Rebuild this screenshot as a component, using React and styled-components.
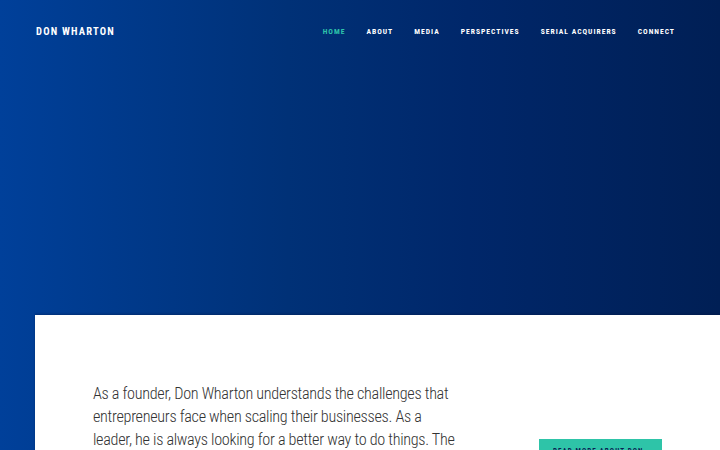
import styled, { createGlobalStyle } from "styled-components";

const GlobalStyle = createGlobalStyle`
  html, body {
    margin: 0;
    padding: 0;
    background: #001f55;
  }
  body {
    font-family: "Roboto", "Liberation Sans", sans-serif;
    overflow: hidden;
  }
`;

const Page = styled.div`
  width: 720px;
  height: 450px;
  overflow: hidden;
  background: linear-gradient(90deg, #00409a 0%, #003177 40%, #00276a 65%, #001f55 100%);
  display: flex;
  flex-direction: column;
`;

const Hero = styled.header`
  height: 315px;
  flex-shrink: 0;
`;

const TopBar = styled.div`
  display: flex;
  align-items: center;
  justify-content: space-between;
  padding: 25px 45px 0 36px;
  height: 12px;
`;

const Brand = styled.div`
  color: #ffffff;
  font-weight: 700;
  font-size: 10.5px;
  letter-spacing: 1.2px;
  font-stretch: 80%;
`;

const Nav = styled.nav`
  display: flex;
  gap: 21px;
`;

const NavLink = styled.a`
  color: ${(p) => (p.$active ? "#2ec4aa" : "#ffffff")};
  font-weight: 700;
  font-size: 7.6px;
  letter-spacing: 1px;
  font-stretch: 80%;
  text-decoration: none;
`;

const Card = styled.section`
  flex: 1;
  margin-left: 35px;
  background: #ffffff;
  box-shadow: 0 -1px 2px rgba(0, 20, 60, 0.35);
  display: flex;
  padding: 67px 0 0 58px;
`;

const Intro = styled.p`
  margin: 0;
  width: 370px;
  flex-shrink: 0;
  font-size: 16.2px;
  line-height: 23px;
  font-weight: 300;
  font-stretch: 75%;
  letter-spacing: -0.3px;
  color: #333;
`;

const Aside = styled.div`
  padding: 56px 0 0 76px;
`;

const Button = styled.a`
  display: inline-block;
  background: #2ec4a8;
  color: #0b2153;
  font-size: 7px;
  font-weight: 700;
  letter-spacing: 1.1px;
  font-stretch: 80%;
  padding: 8px 14px;
  width: 95px;
  white-space: nowrap;
  text-decoration: none;
`;

const links = ["Home", "About", "Media", "Perspectives", "Serial Acquirers", "Connect"];

export default function App() {
  return (
    <Page>
      <GlobalStyle />
      <Hero>
        <TopBar>
          <Brand>DON WHARTON</Brand>
          <Nav>
            {links.map((l, i) => (
              <NavLink key={l} href="#" $active={i === 0}>
                {l.toUpperCase()}
              </NavLink>
            ))}
          </Nav>
        </TopBar>
      </Hero>
      <Card>
        <Intro>
          As a founder, Don Wharton understands the challenges that
          entrepreneurs face when scaling their businesses. As a leader, he is
          always looking for a better way to do things. The
        </Intro>
        <Aside>
          <Button href="#">READ MORE ABOUT DON ›</Button>
        </Aside>
      </Card>
    </Page>
  );
}
